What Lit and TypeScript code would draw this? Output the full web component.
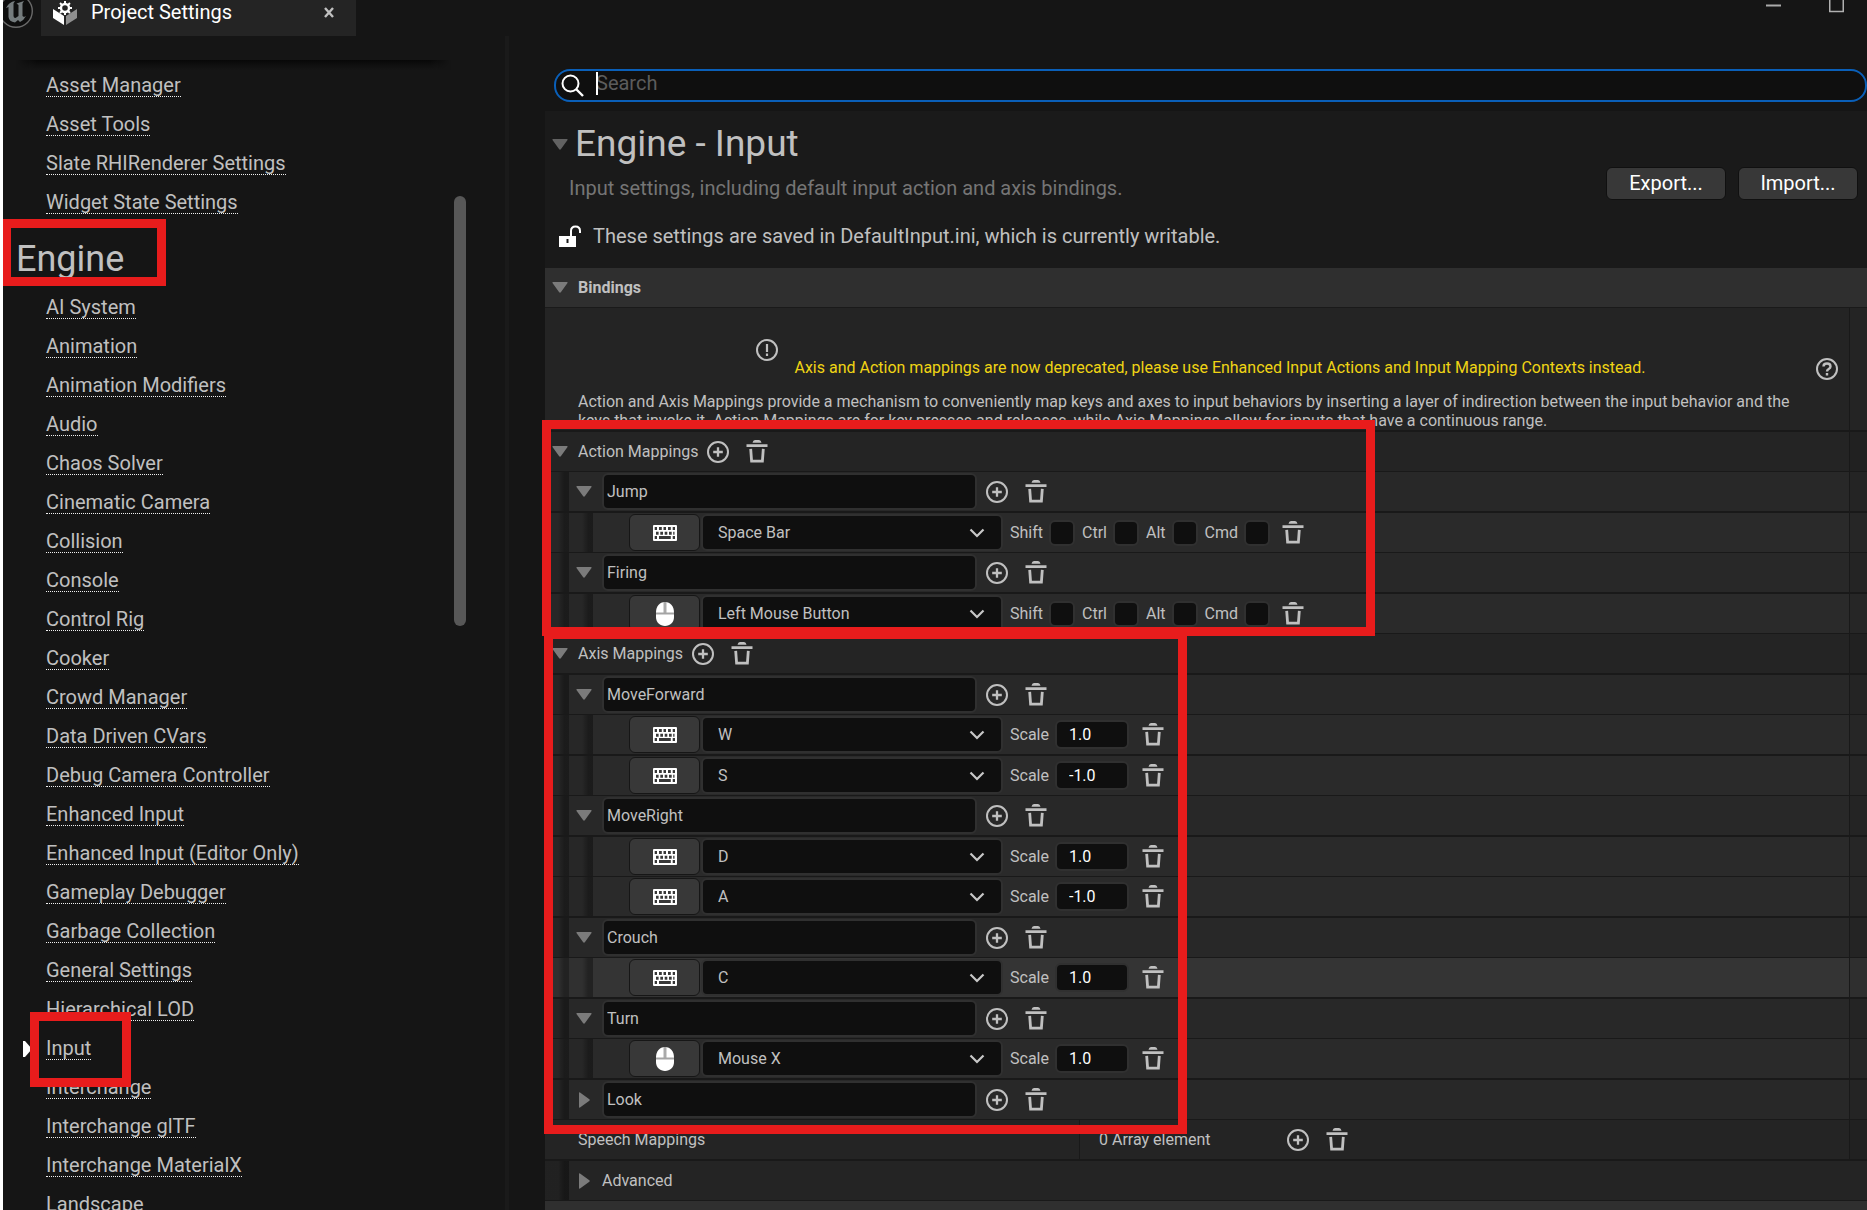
import { LitElement, html, css, svg, nothing } from "lit";
import { customElement, property } from "lit/decorators.js";

const plusIcon = html`<svg class="ic" width="22" height="22" viewBox="0 0 22 22" aria-hidden="true">
  <circle cx="11" cy="11" r="10" fill="none" stroke="#c0c0c0" stroke-width="2" />
  <path d="M11 6.2v9.600M6.200 11h9.600" stroke="#c0c0c0" stroke-width="2.300" />
</svg>`;

const trashIcon = html`<svg class="ic" width="22" height="24" viewBox="0 0 22 24" aria-hidden="true">
  <path d="M6.500 2.800Q7 0 9 0h4q2 0 2.500 2.800zM.5 4.200h21v2.800H.5z" fill="#c0c0c0" />
  <path d="M4.700 8.800l.9 12.300h10.800l.9-12.300" fill="none" stroke="#c0c0c0" stroke-width="2.800" />
</svg>`;

const keyboardIcon = html`<svg class="ic" width="24" height="16" viewBox="0 0 24 16" aria-hidden="true">
  <rect width="24" height="16" rx="1" fill="#fff" />
  <path d="M1.700 2H4v3H1.700zM6 2h2.800v3H6zM10.500 2H13v3h-2.500zM15 2h2.800v3H15zM19.700 2H22v3h-2.300zM3 6.700h2.600v3H3zM7.300 6.700H10v3H7.300zM11.700 6.700h2.600v3h-2.600zM16 6.700h2.700v3H16zM20.200 6.700h1.300v3h-1.300zM1.700 11H4v3H1.700zM6 11h11.800v3H6zM19.700 11H22v3h-2.300z" fill="#383838" />
</svg>`;

const mouseIcon = html`<svg class="ic" width="18" height="24" viewBox="0 0 18 24" aria-hidden="true">
  <path d="M9 0c5.500 0 9 4.500 9 10.500v4.500c0 5.500-4 9-9 9s-9-3.500-9-9v-4.500C0 4.500 3.500 0 9 0z" fill="#fff" />
  <path d="M9 0v11" stroke="#aaa" stroke-width="3" /><path d="M0 11.500h18" stroke="#a4a4a4" stroke-width="2" />
</svg>`;

const downArrow = html`<svg class="ic" width="16" height="11" viewBox="0 0 16 11" aria-hidden="true"><path d="M1 0h14q1 0 .5 1L9 10q-1 1.500-2 0L.5 1Q0 0 1 0z" fill="#7b7b7b" /></svg>`;
const rightArrow = html`<svg class="ic" width="11" height="16" viewBox="0 0 11 16" aria-hidden="true"><path d="M0 1v14q0 1 1 .5L10 9q1.500-1 0-2L1 .5Q0 0 0 1z" fill="#7b7b7b" /></svg>`;

const shared = css`
  .ic { display: block; flex: none; }
  button { background: none; border: 0; padding: 0; margin: 0; color: inherit; font: inherit; display: flex; align-items: center; justify-content: center; flex: none; }
`;

interface Binding { key: string; device: "keyboard" | "mouse"; scale?: string; hovered?: boolean }
interface Mapping { name: string; open: boolean; bindings: Binding[] }

const ACTIONS: Mapping[] = [
  { name: "Jump", open: true, bindings: [{ key: "Space Bar", device: "keyboard" }] },
  { name: "Firing", open: true, bindings: [{ key: "Left Mouse Button", device: "mouse" }] },
];

const AXES: Mapping[] = [
  { name: "MoveForward", open: true, bindings: [{ key: "W", device: "keyboard", scale: "1.0" }, { key: "S", device: "keyboard", scale: "-1.0" }] },
  { name: "MoveRight", open: true, bindings: [{ key: "D", device: "keyboard", scale: "1.0" }, { key: "A", device: "keyboard", scale: "-1.0" }] },
  { name: "Crouch", open: true, bindings: [{ key: "C", device: "keyboard", scale: "1.0", hovered: true }] },
  { name: "Turn", open: true, bindings: [{ key: "Mouse X", device: "mouse", scale: "1.0" }] },
  { name: "Look", open: false, bindings: [] },
];

const GENERAL_LINKS = ["Asset Manager", "Asset Tools", "Slate RHIRenderer Settings", "Widget State Settings"];
const ENGINE_LINKS = [
  "AI System", "Animation", "Animation Modifiers", "Audio", "Chaos Solver", "Cinematic Camera", "Collision", "Console",
  "Control Rig", "Cooker", "Crowd Manager", "Data Driven CVars", "Debug Camera Controller", "Enhanced Input",
  "Enhanced Input (Editor Only)", "Gameplay Debugger", "Garbage Collection", "General Settings", "Hierarchical LOD",
  "Input", "Interchange", "Interchange glTF", "Interchange MaterialX", "Landscape",
];

@customElement("title-bar")
export class TitleBar extends LitElement {
  static styles = [shared, css`
    :host { display: flex; height: 36px; flex: none; overflow: hidden; justify-content: space-between; }
    .left, .controls { display: flex; }
    .logo { width: 38px; }
    .tab { display: flex; width: 315px; height: 36px; background: #242424; color: #fff; font-size: 20px; line-height: 24px; padding: 0 20px 0 11px; box-sizing: border-box; }
    .tab-icon { width: 26px; margin-right: 13px; }
    .label { flex: 1; }
    .close { height: 25px; width: 14px; }
    .controls { gap: 48px; padding-right: 23px; }
    .controls button { align-items: flex-start; }
  `];
  render() {
    const teeth = [0, 45, 90, 135, 180, 225, 270, 315];
    return html`
      <div class="left">
        <div class="logo"><svg class="ic" width="32" height="30" viewBox="0 0 32 30" aria-hidden="true">
          <circle cx="13" cy="11" r="16.300" fill="#0e0e0e" stroke="#6a6a6a" stroke-width="1.400" />
          <path d="M3 8Q6 2 12 1L10.500 3.500V16q0 2 2 2l3-2V5l-2-1.500L21 1l-1.500 2.500V16l1.500 1 2-1q-2 4-6 6l-2-2-3 2.500Q6 21.500 5.500 17V7z" fill="#747b7d" />
        </svg></div>
        <div class="tab">
          <svg class="ic tab-icon" width="26" height="26" viewBox="0 0 26 26" aria-hidden="true">
            <path d="M1 9l11 7v9L1 18z" fill="#fff" /><path d="M25 9l-11 7v9l11-7z" fill="#8f8f8f" />
            <circle cx="13" cy="8" r="4" fill="none" stroke="#fff" stroke-width="2.400" />
            ${teeth.map((a) => svg`<rect x="12" y="1" width="2" height="3" fill="#fff" transform="rotate(${a} 13 8)" />`)}
          </svg>
          <span class="label">Project Settings</span>
          <button class="close" aria-label="Close tab"><svg class="ic" width="10" height="11" viewBox="0 0 10 11"><path d="M1 1l8 9M9 1L1 10" stroke="#c0c0c0" stroke-width="2.400" /></svg></button>
        </div>
      </div>
      <div class="controls">
        <button aria-label="Minimize"><svg class="ic" width="15" height="14" viewBox="0 0 15 14"><path d="M0 5.500h15" stroke="#aaa" stroke-width="2" /></svg></button>
        <button aria-label="Maximize"><svg class="ic" width="15" height="14" viewBox="0 0 15 14"><path d="M.75-2v13.500h13.500V-2" fill="none" stroke="#b0b0b0" stroke-width="1.500" /></svg></button>
      </div>`;
  }
}

@customElement("settings-nav")
export class SettingsNav extends LitElement {
  static styles = [shared, css`
    :host { display: flex; width: 502px; flex: none; border-right: 4px solid #1a1a1a; overflow: hidden; box-sizing: content-box; }
    nav { flex: 1; margin: 24px 0 0 13px; overflow: hidden; }
    .shade { height: 10px; background: linear-gradient(#080808, #0e0e0e 40%, #151515); mask-image: linear-gradient(90deg, transparent, #000 5%, #000 95%, transparent); }
    ul { list-style: none; margin: 0; padding: 0 0 0 30px; }
    li { display: flex; height: 39px; box-sizing: border-box; padding-top: 5px; align-items: flex-start; position: relative; }
    a { color: #c0c0c0; text-decoration: none; font-size: 20px; line-height: 21px; border-bottom: 1px dotted #f0f0f0; }
    h2 { margin: 0; height: 66px; box-sizing: border-box; padding-top: 12px; font-weight: 400; font-size: 36px; line-height: 42px; color: #c0c0c0; }
    .marker { position: absolute; left: -23px; top: 8px; }
    .track { width: 54px; padding: 160px 0 0 3px; box-sizing: border-box; }
    .thumb { width: 12px; height: 430px; border-radius: 6px; background: #575757; }
  `];
  private links(names: string[]) {
    return html`<ul>${names.map((n) => html`<li>
      ${n === "Input" ? html`<svg class="marker" width="9" height="16" viewBox="0 0 9 16" aria-hidden="true"><path d="M0 0h2l7 8-7 8H0z" fill="#fff" /></svg>` : nothing}
      <a href="#${n}">${n}</a></li>`)}</ul>`;
  }
  render() {
    return html`<nav aria-label="Settings sections">
        <div class="shade"></div>
        ${this.links(GENERAL_LINKS)}
        <h2>Engine</h2>
        ${this.links(ENGINE_LINKS)}
      </nav>
      <div class="track"><div class="thumb"></div></div>`;
  }
}

@customElement("mapping-tree")
export class MappingTree extends LitElement {
  @property({ attribute: false }) actions: Mapping[] = [];
  @property({ attribute: false }) axes: Mapping[] = [];
  static styles = [shared, css`
    :host { display: block; font-size: 16px; color: #c0c0c0; }
    .row { display: flex; height: 39px; border-bottom: 1px solid #191919; background: #242424; }
    .row:nth-child(even) { border-bottom-width: 2px; }
    .body { flex: 1; display: flex; align-items: center; min-width: 0; }
    .gutter { width: 17px; flex: none; border-left: 1px solid #191919; background: rgba(0, 0, 0, 0.08); }
    .level1 { background: #282828; }
    .level2 { background: #2a2a2a; }
    .hovered { background: #343434; }
    .strip { width: 24px; flex: none; align-self: stretch; background: linear-gradient(90deg, rgba(0,0,0,.08) 55%, rgba(0,0,0,.35) 80%, rgba(0,0,0,.35)); }
    .twist { width: 30px; height: 32px; }
    .group { padding: 0 9px 0 3px; }
    .adv { padding-left: 3px; }
    .tools { display: flex; gap: 17px; }
    .name { width: 375px; height: 37px; box-sizing: border-box; margin: 0 9px 0 3px; padding: 0 3px 1px; }
    input, select { font: inherit; color: inherit; background: #0f0f0f; border: 2px solid #303030; border-radius: 6px; margin: 0; outline: none; }
    .device { width: 71px; height: 37px; margin-left: 36px; margin-right: 1px; background: #383838; border: 1px solid #161616; border-radius: 6px; box-sizing: border-box; }
    .picker { display: grid; width: 302px; margin-right: 7px; align-items: center; }
    .picker > * { grid-area: 1 / 1; }
    select { appearance: none; height: 37px; width: 100%; padding: 0 15px; }
    .chev { justify-self: end; margin-right: 18px; pointer-events: none; }
    .mod { display: flex; align-items: center; gap: 6px; margin-right: 7px; }
    .mod input { appearance: none; width: 26px; height: 26px; }
    .mods { display: flex; margin-right: 5px; }
    .scale { display: flex; align-items: center; gap: 6px; margin-right: 13px; }
    .scale input { width: 74px; height: 29px; box-sizing: border-box; color: #fff; padding: 0 12px; }
    .speech { width: 535px; padding-left: 33px; box-sizing: border-box; align-self: stretch; display: flex; align-items: center; border-right: 1px solid #191919; }
    .speech + .count { padding-left: 19px; width: 207px; box-sizing: border-box; }
  `];
  private tools(what: string) {
    return html`<div class="tools"><button aria-label="Add ${what}">${plusIcon}</button><button aria-label="Remove ${what}">${trashIcon}</button></div>`;
  }
  private group(title: string) {
    return html`<div class="row"><div class="body"><button class="twist" aria-label="Toggle ${title}">${downArrow}</button><span class="group">${title}</span>${this.tools(title)}</div><div class="gutter"></div></div>`;
  }
  private mapping(m: Mapping) {
    return html`<div class="row level1"><div class="strip"></div><div class="body"><button class="twist" aria-label="Toggle ${m.name}">${m.open ? downArrow : rightArrow}</button>
        <input class="name" aria-label="Mapping name" .value=${m.name} />${this.tools(m.name)}</div><div class="gutter"></div></div>
      ${m.bindings.map((b) => this.binding(b))}`;
  }
  private binding(b: Binding) {
    return html`<div class="row level2 ${b.hovered ? "hovered" : ""}"><div class="strip"></div><div class="strip"></div><div class="body">
      <button class="device" aria-label="Listen for ${b.device} input">${b.device === "mouse" ? mouseIcon : keyboardIcon}</button>
      <div class="picker"><select aria-label="Key"><option>${b.key}</option></select>
        <svg class="ic chev" width="16" height="10" viewBox="0 0 16 10" aria-hidden="true"><path d="M1.500 1.500L8 8l6.500-6.500" fill="none" stroke="#c8c8c8" stroke-width="2.200" /></svg></div>
      ${b.scale === undefined
        ? html`<div class="mods">${["Shift", "Ctrl", "Alt", "Cmd"].map((k) => html`<label class="mod">${k}<input type="checkbox" /></label>`)}</div>`
        : html`<label class="scale">Scale<input .value=${b.scale} /></label>`}
      <button aria-label="Remove ${b.key}">${trashIcon}</button>
    </div><div class="gutter"></div></div>`;
  }
  render() {
    return html`${this.group("Action Mappings")}${this.actions.map((m) => this.mapping(m))}
      ${this.group("Axis Mappings")}${this.axes.map((m) => this.mapping(m))}
      <div class="row"><div class="body"><span class="speech">Speech Mappings</span><span class="count">0 Array element</span>${this.tools("Speech Mappings")}</div><div class="gutter"></div></div>
      <div class="row"><div class="strip"></div><div class="body"><button class="twist" aria-label="Toggle Advanced">${rightArrow}</button><span class="adv">Advanced</span></div></div>`;
  }
}

@customElement("settings-panel")
export class SettingsPanel extends LitElement {
  static styles = [shared, css`
    :host { display: flex; flex-direction: column; flex: 1; min-width: 0; color: #c0c0c0; padding: 33px 0 0 36px; }
    .search { display: flex; align-items: center; height: 33px; margin-left: 9px; margin-bottom: 9px; box-sizing: border-box; border: 2px solid #0a5fb8; border-radius: 16px; background: #0f0f0f; padding: 0 10px 0 5px; position: relative; }
    .search input { flex: 1; background: none; border: 0; outline: none; color: #fff; font: inherit; font-size: 20px; padding: 0 0 5px; margin-left: 12px; }
    .search input::placeholder { color: #5c5c5c; opacity: 1; }
    .caret { position: absolute; left: 40px; top: 1px; width: 2px; height: 23px; background: #fff; }
    .panel { background: #1a1a1a; flex: 1; min-height: 0; }
    header { display: flex; height: 157px; box-sizing: border-box; padding: 11px 9px 0 0; }
    .intro { flex: 1; min-width: 0; }
    .title { display: flex; align-items: center; }
    .title button { width: 30px; opacity: .75; }
    h1 { margin: 0; font-weight: 400; font-size: 37px; line-height: 44px; }
    .about { margin: 9px 0 0 24px; font-size: 20px; line-height: 26px; color: #757575; }
    .saved { display: flex; align-items: center; gap: 12px; margin: 22px 0 0 14px; font-size: 20px; line-height: 26px; }
    .actions { display: flex; gap: 12px; padding-top: 45px; align-items: flex-start; }
    .actions button { width: 120px; height: 33px; background: #383838; color: #fff; font-size: 20px; border: 1px solid #101010; border-radius: 6px; padding-bottom: 2px; }
    .category { display: flex; align-items: center; height: 39px; background: #2f2f2f; border-bottom: 1px solid #1a1a1a; font-size: 16px; }
    .category button { width: 30px; height: 30px; }
    h3 { margin: 0 0 0 3px; font-size: 16px; font-weight: 700; }
    .notice { display: flex; background: #242424; border-bottom: 2px solid #191919; height: 122px; font-size: 16px; line-height: 19px; }
    .notice-body { flex: 1; padding: 31px 0 0 33px; min-width: 0; }
    .warn { display: flex; gap: 16px; justify-content: center; padding-left: 8px; align-items: flex-start; height: 53px; }
    .warn p { margin: 19px 0 0; color: #f0d414; }
    .explain { margin: 0; }
    .help { width: 22px; margin-right: 11px; }
    .gutter { width: 17px; flex: none; border-left: 1px solid #191919; }
    .next { height: 39px; background: #2f2f2f; }
  `];
  render() {
    return html`
      <div class="search">
        <svg class="ic" width="23" height="23" viewBox="0 0 23 23" aria-hidden="true"><circle cx="9.500" cy="9.500" r="8" fill="none" stroke="#fff" stroke-width="2" /><path d="M15 15l7 7" stroke="#fff" stroke-width="2.400" /></svg>
        <input type="text" placeholder="Search" aria-label="Search settings" /><span class="caret"></span>
      </div>
      <div class="panel">
        <header>
          <div class="intro">
            <div class="title"><button aria-label="Toggle section">${downArrow}</button><h1>Engine - Input</h1></div>
            <p class="about">Input settings, including default input action and axis bindings.</p>
            <div class="saved"><svg class="ic" width="22" height="22" viewBox="0 0 22 22" aria-hidden="true"><path d="M12 11V6q0-4.500 4.500-4.500T21 6v2" fill="none" stroke="#fff" stroke-width="2" /><path fill-rule="evenodd" d="M0 11h17v11H0zM7.500 14v4h2v-4z" fill="#fff" /></svg>
              <span>These settings are saved in DefaultInput.ini, which is currently writable.</span></div>
          </div>
          <div class="actions"><button>Export...</button><button>Import...</button></div>
        </header>
        <div class="category"><button aria-label="Toggle Bindings">${downArrow}</button><h3>Bindings</h3></div>
        <div class="notice">
          <div class="notice-body">
            <div class="warn"><svg class="ic" width="22" height="22" viewBox="0 0 22 22" aria-hidden="true"><circle cx="11" cy="11" r="10" fill="none" stroke="#c0c0c0" stroke-width="2" /><path d="M11 5v8M11 14.500v2.500" stroke="#c0c0c0" stroke-width="2.200" /></svg>
              <p>Axis and Action mappings are now deprecated, please use Enhanced Input Actions and Input Mapping Contexts instead.</p></div>
            <p class="explain">Action and Axis Mappings provide a mechanism to conveniently map keys and axes to input behaviors by inserting a layer of indirection between the input behavior and the keys that invoke it. Action Mappings are for key presses and releases, while Axis Mappings allow for inputs that have a continuous range.</p>
          </div>
          <button class="help" aria-label="Help"><svg class="ic" width="22" height="22" viewBox="0 0 22 22"><circle cx="11" cy="11" r="10" fill="none" stroke="#c0c0c0" stroke-width="2" /><path d="M7.500 8.500Q7.500 5.500 11 5.500t3.500 3q0 1.500-1.800 2.500-1.700 1-1.700 2.500M11 15v2.500" fill="none" stroke="#c0c0c0" stroke-width="2.400" /></svg></button>
          <div class="gutter"></div>
        </div>
        <mapping-tree .actions=${ACTIONS} .axes=${AXES}></mapping-tree>
        <div class="next"></div>
      </div>`;
  }
}

@customElement("app-root")
export class AppRoot extends LitElement {
  static styles = css`
    :host { display: flex; flex-direction: column; position: relative; height: 100vh; overflow: hidden; box-sizing: border-box; background: #151515; border-left: 3px solid #fff; font-family: Roboto, "Liberation Sans", sans-serif; }
    .main { display: flex; flex: 1; min-height: 0; }
    .mark { position: absolute; box-sizing: border-box; border: 9px solid #e81c1c; pointer-events: none; }
    .engine { left: -1px; top: 219px; width: 164px; height: 67px; }
    .input { left: 27px; top: 1012px; width: 101px; height: 75px; }
    .action { left: 539px; top: 420px; width: 833px; height: 216px; }
    .axis { left: 541px; top: 630px; width: 643px; height: 504px; }
  `;
  render() {
    return html`<title-bar></title-bar>
      <div class="main"><settings-nav></settings-nav><settings-panel></settings-panel></div>
      <div class="mark engine"></div><div class="mark input"></div><div class="mark action"></div><div class="mark axis"></div>`;
  }
}
